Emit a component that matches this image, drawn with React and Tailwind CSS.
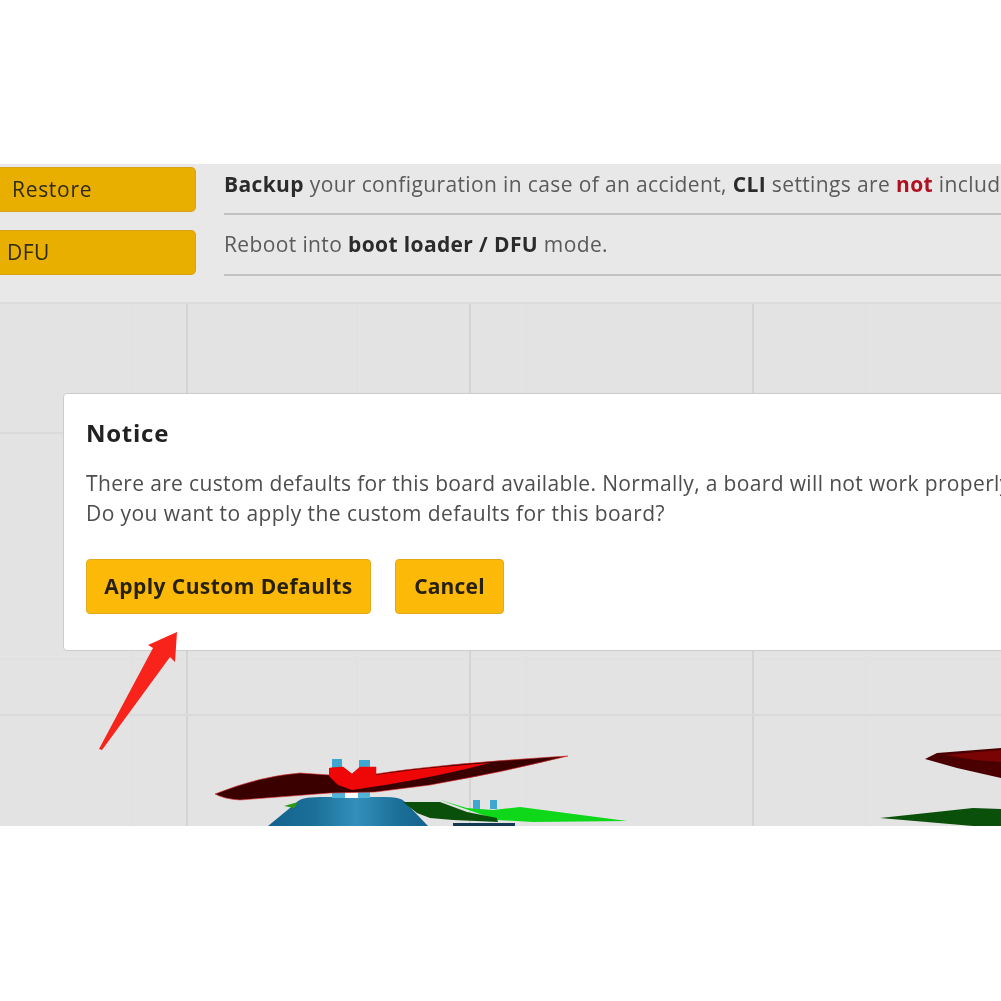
export default function App() {
  return (
    <div className="w-[1001px] h-[1001px] overflow-hidden bg-white font-['Open_Sans',sans-serif] blur-[0.4px]">
      <div className="h-[164px]" />
      <div className="w-[1001px] h-[140px] bg-[#e8e8e8] flex items-start border-b-2 border-[#dcdcdc]">
        <div className="w-[196px] shrink-0 pt-[3px] flex flex-col gap-[18px]">
          <div className="h-[45px] bg-[#e8ae00] border border-[#d6a21a] rounded-r-[5px] border-l-0 flex items-center pl-[12px] text-[21px] font-medium tracking-[0.7px] text-[#2e2b1c]">Restore</div>
          <div className="h-[45px] bg-[#e8ae00] border border-[#d6a21a] rounded-r-[5px] border-l-0 flex items-center pl-[7px] text-[21px] font-medium tracking-[0.4px] text-[#2e2b1c]">DFU</div>
        </div>
        <div className="ml-[28px] flex-1 min-w-0 text-[21px] tracking-[0.37px] text-[#5a5a5a] whitespace-nowrap">
          <div className="h-[51px] border-b-2 border-[#c2c2c2] pt-[4px] leading-[32px] overflow-hidden">
            <b className="text-[#2b2b2b]">Backup</b> your configuration in case of an accident, <b className="text-[#2b2b2b]">CLI</b> settings are <b className="text-[#b01020]">not</b> included
          </div>
          <div className="h-[61px] border-b-2 border-[#c2c2c2] pt-[13px] leading-[32px]">
            Reboot into <b className="text-[#2b2b2b]">boot loader / DFU</b> mode.
          </div>
        </div>
      </div>
      <div className="relative w-[1001px] h-[522px] bg-[#e3e3e3] overflow-hidden">
        <svg className="absolute inset-0 blur-[0.7px]" width="1001" height="522" viewBox="0 304 1001 522">
          <defs>
            <linearGradient id="motor" x1="0" x2="1" y1="0" y2="0">
              <stop offset="0" stopColor="#14628f" />
              <stop offset="0.3" stopColor="#1b7199" />
              <stop offset="0.55" stopColor="#3390bb" />
              <stop offset="0.8" stopColor="#1b7199" />
              <stop offset="1" stopColor="#14628f" />
            </linearGradient>
          </defs>
          <path d="M131 304V826M357 304V826M526 304V826M866 304V826M0 659H1001" stroke="#e0e0e0" strokeWidth="1" fill="none" />
          <path d="M187 304V826M470 304V826M753 304V826" stroke="#d4d4d4" strokeWidth="2" fill="none" />
          <path d="M0 433H1001M0 715H1001" stroke="#dadada" strokeWidth="2" fill="none" />
          {/* left motor */}
          <path d="M268 826L296 803Q300 797 320 797H385Q400 797 404 801L428 826Z" fill="url(#motor)" />
          <path d="M332 790h38v8h-38z" fill="#4fb4d8" />
          <path d="M345 790h13v8h-13z" fill="#ffffff" />
          <path d="M332 759h10v9h-10zM359 760h11v8h-11z" fill="#3fa6cf" />
          {/* green prop */}
          <path d="M284 806L298 802L294 808Z" fill="#2d9a12" />
          <path d="M440 800L467 808L493 810L520 807L627 821L533 822L497 820Z" fill="#0fd81a" />
          <path d="M403 802H440L467 812L497 818L498 822L453 820L430 818L417 813Z" fill="#0a4f0a" />
          <path d="M473 800h7v9h-7zM490 800h7v9h-7z" fill="#3fa6cf" />
          <path d="M453 826v-3h62v3z" fill="#123a55" />
          {/* red prop */}
          <path d="M215 794Q260 776 300 773L330 775V768L343 767L352 774L360 767H376V774Q440 764 568 756Q500 773 430 785L375 792L330 793L240 800Q224 799 215 794Z" fill="#3a0000" stroke="#e83030" strokeWidth="0.6" />
          <path d="M329 768L343 767L352 774L360 767H376V775Q420 768 490 763Q440 776 385 785L352 790L338 785L329 776Z" fill="#ef0606" />
          {/* right props */}
          <path d="M925 759L937 753L1001 748V778L957 768Z" fill="#4a0000" />
          <path d="M945 755L1001 750V762L975 760Z" fill="#7a0404" />
          <path d="M880 818L973 808L1001 809V826H973Z" fill="#0a4f0a" />
        </svg>
        <div className="absolute left-[63px] top-[89px] w-[1100px] h-[258px] bg-white border border-[#cccccc] rounded-[4px] pl-[22px] pt-[22px] whitespace-nowrap">
          <div className="text-[24px] leading-[34px] font-bold tracking-[0.75px] text-[#222]">Notice</div>
          <div className="mt-[18px] text-[21px] leading-[30px] text-[#4d4d4d]">
            <span className="tracking-[0.35px]">There are custom defaults for this board available. Normally, a board will not work properly without them.</span><br />
            <span className="tracking-[0.42px]">Do you want to apply the custom defaults for this board?</span>
          </div>
          <div className="mt-[31px] flex gap-[24px]">
            <button className="h-[55px] w-[285px] bg-[#fdb908] border border-[#e2a91a] rounded-[4px] text-[21px] font-bold tracking-[0.43px] text-[#26200f]">Apply Custom Defaults</button>
            <button className="h-[55px] w-[109px] bg-[#fdb908] border border-[#e2a91a] rounded-[4px] text-[21px] font-bold tracking-[0.2px] text-[#26200f]">Cancel</button>
          </div>
        </div>
        <svg className="absolute inset-0 pointer-events-none" width="1001" height="522" viewBox="0 304 1001 522">
          <path d="M99 749L153 648L148 645L177 632L175 662L170 657L102 750Z" fill="#f8231a" />
        </svg>
      </div>
    </div>
  );
}
